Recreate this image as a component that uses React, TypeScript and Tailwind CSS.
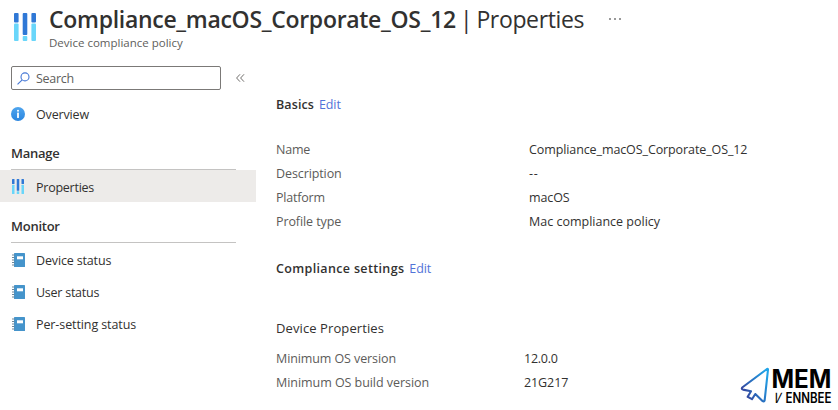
import type { ReactNode } from "react";

function BarsIcon({ className }: { className: string }) {
  return (
    <svg viewBox="0 0 22 28" preserveAspectRatio="none" className={className}>
      <rect x="0" y="0" width="4.6" height="9.5" rx="1" fill="#2f78d6" />
      <rect x="0" y="10.5" width="4.6" height="17.5" rx="1" fill="#69d6fa" />
      <rect x="8.7" y="0" width="4.6" height="22" rx="1" fill="#2f78d6" />
      <rect x="8.7" y="23" width="4.6" height="5" rx="1" fill="#69d6fa" />
      <rect x="17.4" y="0" width="4.6" height="9.5" rx="1" fill="#2f78d6" />
      <rect x="17.4" y="10.5" width="4.6" height="17.5" rx="1" fill="#69d6fa" />
    </svg>
  );
}

function InfoIcon() {
  return (
    <svg viewBox="0 0 14 14" className="size-3.5">
      <defs>
        <linearGradient id="info" x1="0" y1="0" x2="0" y2="1">
          <stop offset="0" stopColor="#4fa5ee" />
          <stop offset="1" stopColor="#2a85df" />
        </linearGradient>
      </defs>
      <circle cx="7" cy="7" r="7" fill="url(#info)" />
      <circle cx="7" cy="3.7" r="1" fill="#fff" />
      <rect x="6.1" y="5.6" width="1.8" height="5.4" rx="0.6" fill="#fff" />
    </svg>
  );
}

function NotebookIcon() {
  return (
    <svg viewBox="0 0 13 14" className="ml-px h-3.5 w-[13px]">
      <rect x="2" y="0" width="11" height="14" rx="0.6" fill="#4594cb" />
      <rect x="5" y="3.3" width="6" height="3" fill="#fff" />
      <path d="M0 2h2.6M0 4.5h2.6M0 7h2.6M0 9.5h2.6M0 12h2.6" stroke="#6e8798" strokeWidth="1" />
    </svg>
  );
}

function NavItem({ icon, label, track, active }: { icon: ReactNode; label: string; track: string; active?: boolean }) {
  return (
    <div className={`flex h-8 items-center pl-[11px] ${active ? "bg-[#edebe9] pt-px" : ""}`}>
      <span className="flex w-[25px] items-center">{icon}</span>
      <span className={`pt-0.5 ${track}`}>{label}</span>
    </div>
  );
}

function NavHeading({ label }: { label: string }) {
  return (
    <div className="ml-[11px] mr-5 flex h-[33px] items-center border-b border-[#c4c3c2] text-[13px] font-semibold tracking-[-0.25px]">
      {label}
    </div>
  );
}

function Row({ label, value, labelTrack, valueTrack, labelWidth }: { label: string; value: string; labelTrack: string; valueTrack: string; labelWidth: string }) {
  return (
    <div className="flex h-6 items-center">
      <span className={`shrink-0 text-[#5c5b59] ${labelWidth} ${labelTrack}`}>{label}</span>
      <span className={valueTrack}>{value}</span>
    </div>
  );
}

function SectionTitle({ label, track }: { label: string; track: string }) {
  return (
    <div className="flex h-6 items-center gap-[5px]">
      <span className={`font-semibold ${track}`}>{label}</span>
      <a className="tracking-[-0.1px] text-[#5273d8]">Edit</a>
    </div>
  );
}

function BrandMark() {
  return (
    <svg viewBox="0 0 98 45" className="absolute left-[740px] top-[365px] h-[45px] w-[98px]">
      <defs>
        <linearGradient id="arrow" gradientUnits="userSpaceOnUse" x1="2" y1="24" x2="28" y2="10">
          <stop offset="0" stopColor="#34479f" />
          <stop offset="0.5" stopColor="#2878c6" />
          <stop offset="1" stopColor="#21a4e8" />
        </linearGradient>
      </defs>
      <path
        d="M27 4 L2.2 22.5 Q1.2 24 3 24.6 L11 26.2 L7.7 31.8 L12 34.2 L15.3 29 L22.5 36 Q24.4 37 24.7 35 L28 4.7 Q28 3.4 27 4 Z"
        fill="none"
        stroke="url(#arrow)"
        strokeWidth="2.1"
        strokeLinejoin="round"
      />
      <text x="31.5" y="23" textLength="60" lengthAdjust="spacingAndGlyphs" className="fill-black font-['Inter',sans-serif] text-[25px] font-bold">MEM</text>
      <text transform="translate(33 37.5) skewX(-14)" textLength="7" lengthAdjust="spacingAndGlyphs" className="fill-black font-['Inter',sans-serif] text-[14px] font-medium">V</text>
      <text x="45.5" y="37.5" textLength="46" lengthAdjust="spacingAndGlyphs" className="fill-black font-['Inter',sans-serif] text-[14px] font-semibold">ENNBEE</text>
    </svg>
  );
}

export default function App() {
  return (
    <div className="relative h-[410px] w-[838px] overflow-hidden bg-white font-['Open_Sans','Noto_Sans',sans-serif] text-[12.5px] leading-4 text-[#323130]">
      <header className="flex h-[54px] items-start pl-3.5">
        <BarsIcon className="mt-[13px] h-7 w-[22px]" />
        <div className="ml-[13px]">
          <h1 className="mt-[5px] flex h-7 items-center whitespace-pre text-[23px] leading-7">
            <span className="font-semibold tracking-[-0.3px]">Compliance_macOS_Corporate_OS_12</span>
            <span className="tracking-[-0.35px] [word-spacing:-1.5px]"> | Properties</span>
          </h1>
          <p className="mt-0.5 text-[11.5px] text-[#605e5c]">Device compliance policy</p>
        </div>
        <div className="ml-[25px] mt-[18px] flex gap-[3px]">
          <i className="size-0.5 rounded-full bg-[#777]" />
          <i className="size-0.5 rounded-full bg-[#777]" />
          <i className="size-0.5 rounded-full bg-[#777]" />
        </div>
      </header>

      <div className="flex">
        <nav className="w-64 shrink-0 pt-3">
          <div className="flex h-6 items-center pl-[11px]">
            <div className="flex h-6 w-[210px] items-center rounded-xs border border-[#7b7977] pl-[5px] text-[#605e5c]">
              <svg viewBox="0 0 13 13" className="mr-1.5 size-[13px]" fill="none" stroke="#4477d5" strokeWidth="1.1">
                <circle cx="8" cy="4.9" r="4" />
                <path d="M5.2 7.8 L0.5 12.4" />
              </svg>
              <span className="pt-0.5 tracking-[-0.3px]">Search</span>
            </div>
            <svg viewBox="0 0 9 8" className="ml-[15px] h-2 w-[9px]" fill="none" stroke="#706e6c" strokeWidth="1">
              <path d="M4 0.3 L0.6 4 L4 7.7 M8 0.3 L4.6 4 L8 7.7" />
            </svg>
          </div>
          <div className="mt-2">
            <NavItem icon={<InfoIcon />} label="Overview" track="tracking-[-0.15px]" />
          </div>
          <div className="mt-[7px]">
            <NavHeading label="Manage" />
            <NavItem active icon={<BarsIcon className="ml-px h-[15px] w-3" />} label="Properties" track="tracking-[-0.25px]" />
          </div>
          <div className="mt-2">
            <NavHeading label="Monitor" />
            <div className="pt-px">
              <NavItem icon={<NotebookIcon />} label="Device status" track="tracking-[-0.15px]" />
              <NavItem icon={<NotebookIcon />} label="User status" track="tracking-[-0.25px]" />
              <NavItem icon={<NotebookIcon />} label="Per-setting status" track="tracking-[-0.1px]" />
            </div>
          </div>
        </nav>

        <main className="flex-1 pl-5 pt-[39px]">
          <SectionTitle label="Basics" track="tracking-[0.1px]" />
          <div className="mt-[21px]">
            <Row label="Name" value="Compliance_macOS_Corporate_OS_12" labelWidth="w-[253px]" labelTrack="tracking-[-0.2px]" valueTrack="tracking-[-0.1px]" />
            <Row label="Description" value="--" labelWidth="w-[253px]" labelTrack="tracking-[-0.1px]" valueTrack="tracking-[0.8px]" />
            <Row label="Platform" value="macOS" labelWidth="w-[253px]" labelTrack="tracking-[-0.2px]" valueTrack="tracking-[-0.1px]" />
            <Row label="Profile type" value="Mac compliance policy" labelWidth="w-[253px]" labelTrack="tracking-[-0.1px]" valueTrack="tracking-[0px]" />
          </div>
          <div className="mt-[23px]">
            <SectionTitle label="Compliance settings" track="tracking-[0.35px]" />
          </div>
          <h3 className="mt-[35px] flex h-6 items-center text-[13px] tracking-[0.1px]">Device Properties</h3>
          <div className="mt-[7px]">
            <Row label="Minimum OS version" value="12.0.0" labelWidth="w-[248px]" labelTrack="tracking-[-0.1px]" valueTrack="tracking-[-0.25px]" />
            <Row label="Minimum OS build version" value="21G217" labelWidth="w-[248px]" labelTrack="tracking-[-0.05px]" valueTrack="tracking-[-0.1px]" />
          </div>
        </main>
      </div>

      <BrandMark />
    </div>
  );
}
